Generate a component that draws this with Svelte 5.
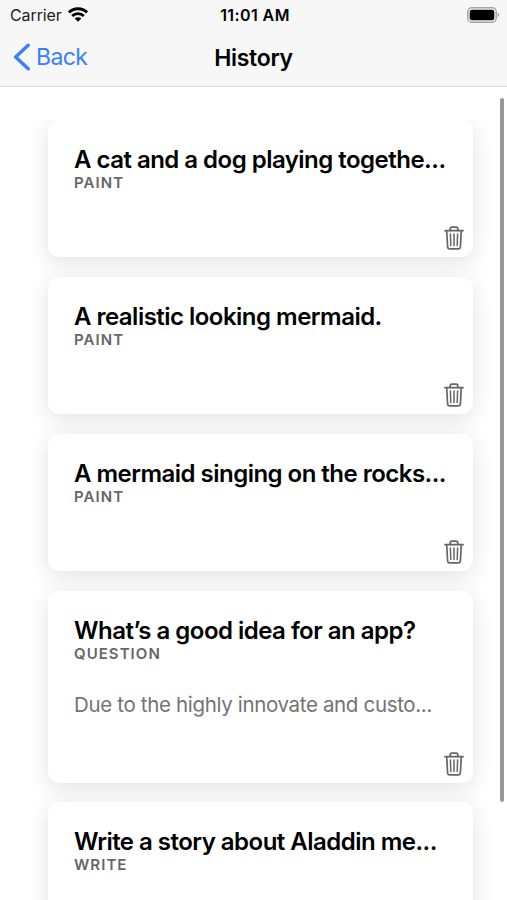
<script lang="ts">
  interface Entry {
    title: string;
    kind: string;
    answer?: string;
  }

  let entries: Entry[] = [
    { title: 'A cat and a dog playing togethe...', kind: 'Paint' },
    { title: 'A realistic looking mermaid.', kind: 'Paint' },
    { title: 'A mermaid singing on the rocks...', kind: 'Paint' },
    {
      title: 'What’s a good idea for an app?',
      kind: 'Question',
      answer: 'Due to the highly innovate and custo...'
    },
    { title: 'Write a story about Aladdin me...', kind: 'Write' }
  ];

  function remove(entry: Entry) {
    entries = entries.filter((e) => e !== entry);
  }
</script>

<div class="screen">
  <header>
    <div class="status-bar">
      <div class="carrier">
        <span>Carrier</span>
        <svg class="wifi" width="20" height="15" viewBox="0 0 20 15">
          <g fill="none" stroke="#000" stroke-width="2.9">
            <path d="M1 5.4a12.8 12.8 0 0 1 18 0" />
            <path d="M4.2 9a8.2 8.2 0 0 1 11.6 0" />
          </g>
          <path d="M10 14.8 6.6 11.6a4.8 4.8 0 0 1 6.8 0z" />
        </svg>
      </div>
      <span class="time">11:01 AM</span>
      <svg class="battery" width="33" height="16" viewBox="0 0 33 16">
        <rect x="0.8" y="0.8" width="28.4" height="14.4" rx="4" fill="none" stroke="#a5a5a5" stroke-width="1.5" />
        <rect x="2.7" y="2.7" width="24.6" height="10.6" rx="2.2" />
        <path d="M30.6 5.8c2.2.6 2.2 3.8 0 4.4z" fill="#a5a5a5" />
      </svg>
    </div>
    <nav>
      <button class="back">
        <svg width="18" height="28" viewBox="0 0 18 28">
          <path d="M15.2 2.2 2.6 14l12.6 11.8" fill="none" stroke="currentColor" stroke-width="3.4" stroke-linecap="round" stroke-linejoin="round" />
        </svg>
        <span>Back</span>
      </button>
      <h1>History</h1>
    </nav>
  </header>

  <main>
    <div class="list">
      {#each entries as entry}
        <article class:has-answer={entry.answer}>
          <h2>{entry.title}</h2>
          <h3>{entry.kind}</h3>
          {#if entry.answer}
            <p>{entry.answer}</p>
          {/if}
          <button class="trash" aria-label="Delete" on:click={() => remove(entry)}>
            <svg width="20" height="24" viewBox="0 0 20 24" fill="none" stroke="currentColor" stroke-linecap="round" stroke-linejoin="round">
              <path d="M1 4.7h18" stroke-width="1.8" />
              <path d="m2.7 4.9.9 15.9q.1 2.1 2.1 2.1h8.6q2 0 2.1-2.1l.9-15.9" stroke-width="1.7" />
              <path d="M6.2 4.4V2.8q0-1.7 1.7-1.7h4.2q1.7 0 1.7 1.7v1.6" stroke-width="1.7" />
              <path d="m6.4 8 .4 11.6M10 8v11.6M13.6 8l-.4 11.6" stroke-width="1.5" />
            </svg>
          </button>
        </article>
      {/each}
    </div>
    <div class="scrollbar"></div>
  </main>
</div>

<style>
  :global(body) {
    background: #fff;
  }

  .screen {
    display: flex;
    flex-direction: column;
    width: 507px;
    height: 900px;
    overflow: hidden;
    font-family: Inter, 'Liberation Sans', sans-serif;
    color: #000;
  }

  header {
    flex: none;
    box-sizing: border-box;
    height: 87px;
    background: #f7f7f7;
    border-bottom: 1px solid #d8d8d8;
  }

  .status-bar {
    display: grid;
    grid-template-columns: 1fr auto 1fr;
    align-items: center;
    height: 29px;
    padding: 0 7px 0 10px;
    font-size: 16px;
  }

  .carrier {
    display: flex;
    align-items: center;
    gap: 6px;
    color: #222;
    letter-spacing: -0.1px;
  }

  .time {
    font-weight: 600;
    letter-spacing: 0.4px;
  }

  .battery {
    justify-self: end;
  }

  nav {
    display: grid;
    grid-template-columns: 1fr auto 1fr;
    align-items: center;
    height: 57px;
    padding: 0 13px;
  }

  button {
    padding: 0;
    border: none;
    background: none;
    font: inherit;
    cursor: pointer;
  }

  .back {
    display: flex;
    align-items: center;
    gap: 5px;
    margin-top: -1px;
    color: #3880ff;
    font-size: 23px;
    letter-spacing: -0.6px;
  }

  h1 {
    margin: 0;
    font-size: 23px;
    font-weight: 600;
    letter-spacing: -0.3px;
  }

  main {
    flex: 1;
    display: flex;
    min-height: 0;
    padding-top: 11px;
  }

  .list {
    flex: 1;
    margin-top: 22px;
    padding: 0 27px 0 48px;
    overflow: hidden;
  }

  article {
    position: relative;
    box-sizing: border-box;
    height: 137px;
    margin-bottom: 20px;
    padding: 26px 26px 0;
    border-radius: 11px;
    background: #fff;
    box-shadow: 0 5px 22px rgba(0, 0, 0, 0.12);
    white-space: nowrap;
  }

  article.has-answer {
    height: 192px;
    margin-bottom: 19px;
  }

  h2 {
    margin: 0;
    font-size: 24px;
    line-height: 28px;
    font-weight: 600;
    letter-spacing: -0.52px;
  }

  h3 {
    margin: -1px 0 0;
    font-size: 15px;
    line-height: 20px;
    font-weight: 600;
    letter-spacing: 1.05px;
    text-transform: uppercase;
    color: #666;
  }

  p {
    margin: 27px 0 0;
    font-size: 20.5px;
    line-height: 28px;
    letter-spacing: -0.34px;
    color: #737373;
  }

  .trash {
    position: absolute;
    right: 9px;
    bottom: 7px;
    display: flex;
    color: #666;
  }

  .scrollbar {
    flex: none;
    width: 4px;
    height: 704px;
    margin-right: 3px;
    border-radius: 2px;
    background: #999;
  }
</style>
